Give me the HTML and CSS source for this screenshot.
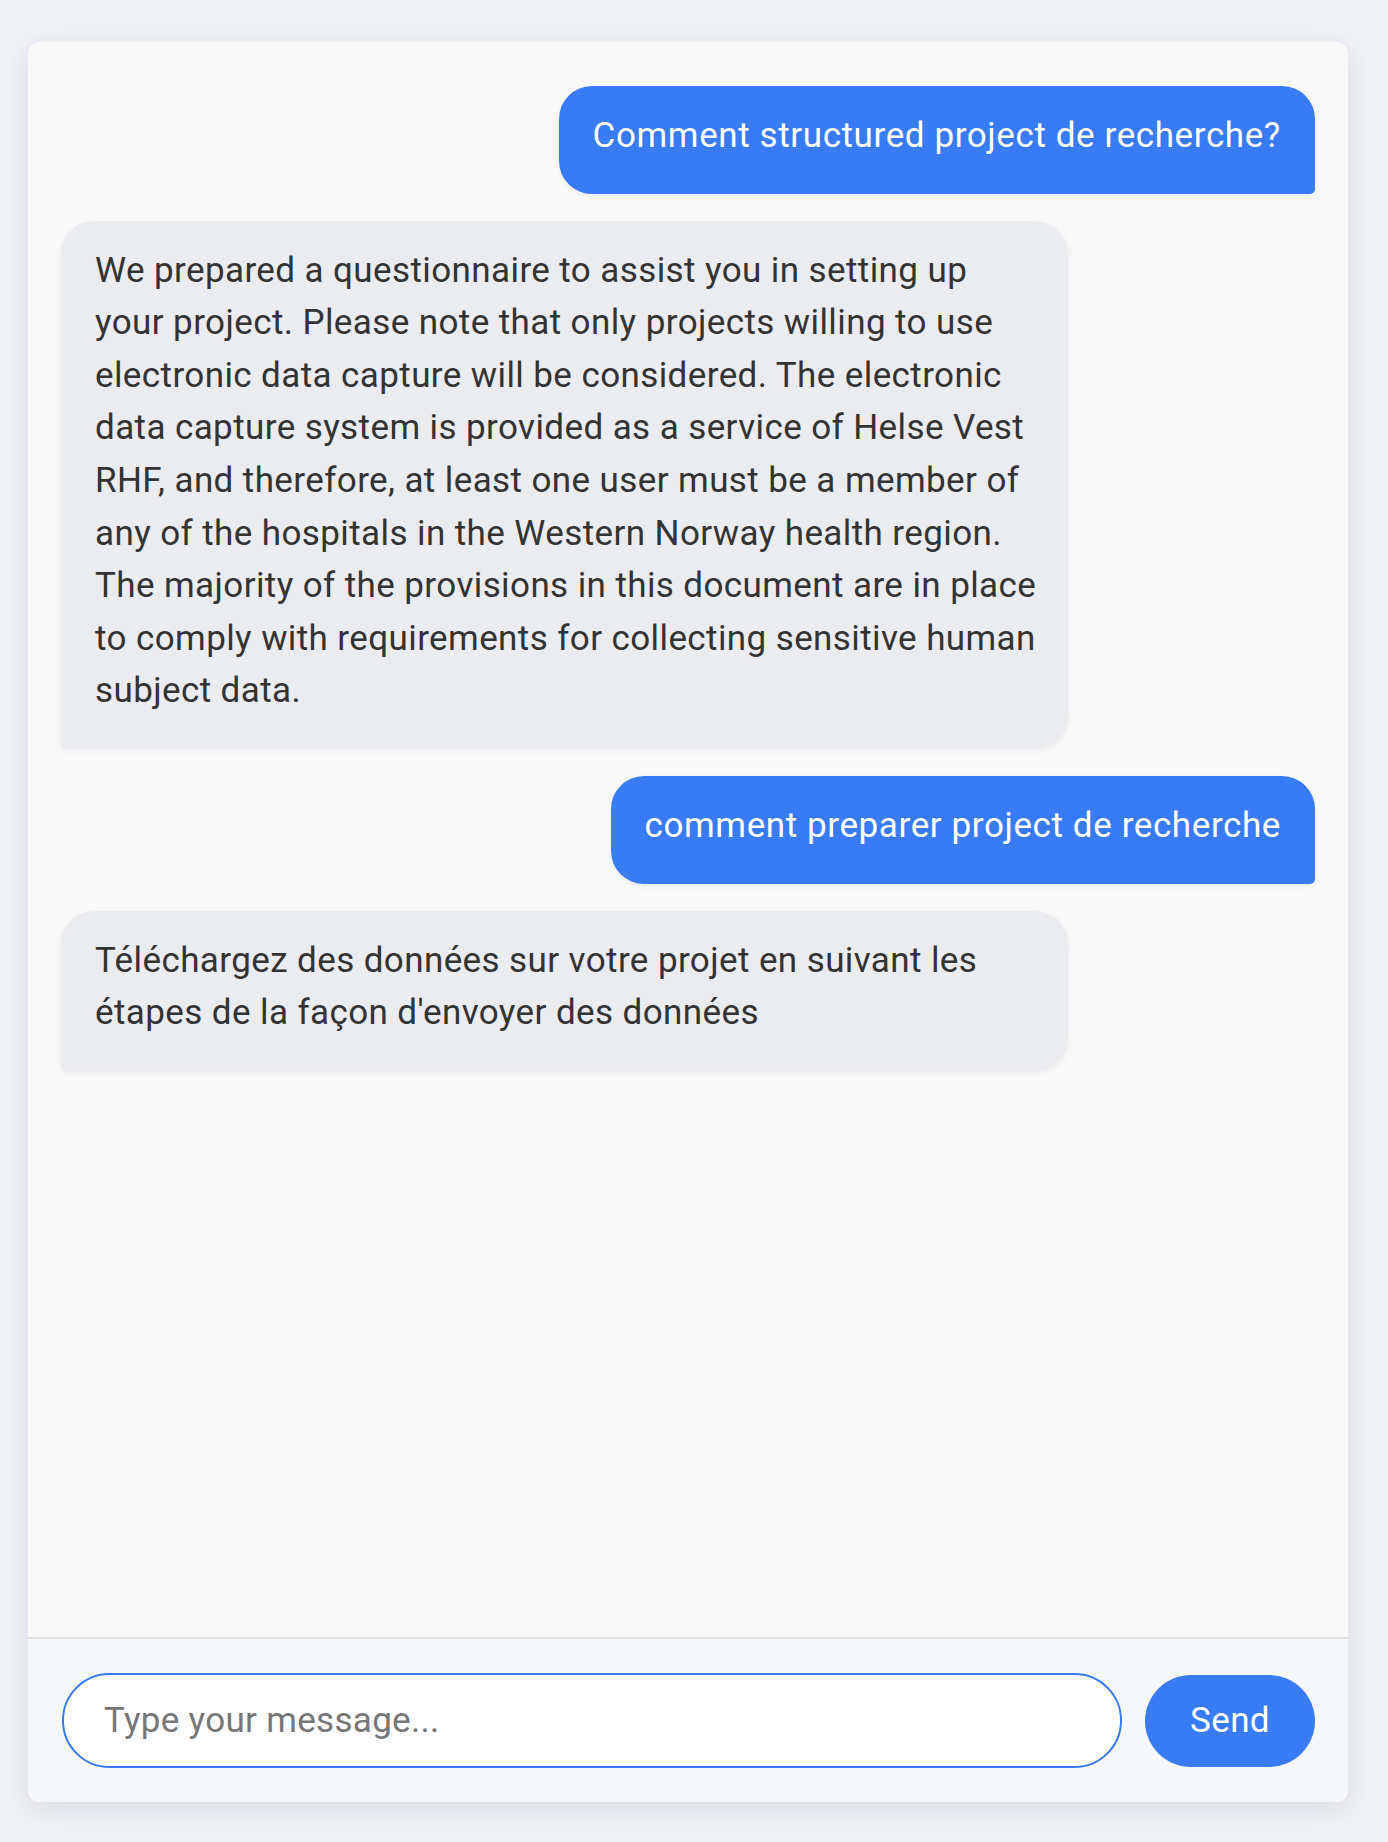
FILE: index.html
```html
<!DOCTYPE html>
<html lang="en">
<head>
<meta charset="utf-8">
<title>Chat</title>
<link rel="stylesheet" href="styles.css">
</head>
<body>
<div class="page">
  <div class="card">
    <div class="messages">
      <div class="msg user">Comment structured project de recherche?</div>
      <div class="msg bot">We prepared a questionnaire to assist you in setting up your project. Please note that only projects willing to use electronic data capture will be considered. The electronic data capture system is provided as a service of Helse Vest RHF, and therefore, at least one user must be a member of any of the hospitals in the Western Norway health region. The majority of the provisions in this document are in place to comply with requirements for collecting sensitive human subject data.</div>
      <div class="msg user">comment preparer project de recherche</div>
      <div class="msg bot">Téléchargez des données sur votre projet en suivant les étapes de la façon d'envoyer des données</div>
    </div>
    <div class="composer">
      <input class="field" type="text" placeholder="Type your message..." autofocus>
      <button class="send" type="button">Send</button>
    </div>
  </div>
</div>
</body>
</html>
```
FILE: styles.css
```css
* { box-sizing: border-box; }
html, body { margin: 0; padding: 0; }
body {
  background: #f0f1f5;
  font-family: Roboto, "Liberation Sans", Arial, sans-serif;
}
.page {
  padding: 42px 40px 40px 28px;
}
.card {
  height: 1760px;
  background: #f9f9f9;
  border-radius: 12px;
  box-shadow: 0 6px 28px rgba(30, 40, 70, 0.10);
  display: flex;
  flex-direction: column;
  overflow: hidden;
}
.messages {
  flex: 1;
  padding: 44px 33px 33px 33px;
  display: flex;
  flex-direction: column;
  gap: 27px;
}
.msg {
  max-width: 80.3%;
  font-size: 35px;
  line-height: 52.6px;
  letter-spacing: 0.4px;
  padding: 24px 28px 31px 34px;
  box-shadow: 0 2px 6px rgba(0, 0, 0, 0.06);
}
.user {
  align-self: flex-end;
  background: #387bf5;
  color: #ffffff;
  letter-spacing: 0.6px;
  padding-right: 34px;
  border-radius: 33px 33px 5px 33px;
}
.bot {
  align-self: flex-start;
  background: #ebecef;
  color: #333333;
  border-radius: 33px 33px 33px 5px;
}
.composer {
  border-top: 2px solid #e0e0e0;
  background: #f6f7f9;
  padding: 34px 33px 34px 34px;
  display: flex;
  align-items: center;
  gap: 23px;
}
.field {
  flex: 1;
  height: 95px;
  border: 2px solid #387bf5;
  border-radius: 48px;
  background: #ffffff;
  padding: 0 40px;
  font-family: inherit;
  font-size: 35px;
  letter-spacing: 0.3px;
  color: #333;
  outline: none;
}
.field::placeholder { color: #777777; }
.send {
  width: 170px;
  height: 92px;
  border: none;
  border-radius: 46px;
  background: #387bf5;
  color: #ffffff;
  font-family: inherit;
  font-size: 35px;
  letter-spacing: 0.4px;
}
```
